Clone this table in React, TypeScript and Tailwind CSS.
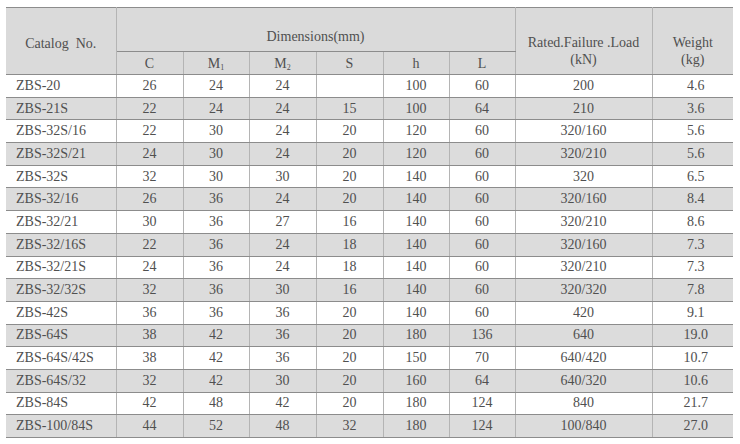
import React from 'react';

type Row = [string, string, string, string, string, string, string, string, string];

const ROWS: Row[] = [
  ['ZBS-20', '26', '24', '24', '', '100', '60', '200', '4.6'],
  ['ZBS-21S', '22', '24', '24', '15', '100', '64', '210', '3.6'],
  ['ZBS-32S/16', '22', '30', '24', '20', '120', '60', '320/160', '5.6'],
  ['ZBS-32S/21', '24', '30', '24', '20', '120', '60', '320/210', '5.6'],
  ['ZBS-32S', '32', '30', '30', '20', '140', '60', '320', '6.5'],
  ['ZBS-32/16', '26', '36', '24', '20', '140', '60', '320/160', '8.4'],
  ['ZBS-32/21', '30', '36', '27', '16', '140', '60', '320/210', '8.6'],
  ['ZBS-32/16S', '22', '36', '24', '18', '140', '60', '320/160', '7.3'],
  ['ZBS-32/21S', '24', '36', '24', '18', '140', '60', '320/210', '7.3'],
  ['ZBS-32/32S', '32', '36', '30', '16', '140', '60', '320/320', '7.8'],
  ['ZBS-42S', '36', '36', '36', '20', '140', '60', '420', '9.1'],
  ['ZBS-64S', '38', '42', '36', '20', '180', '136', '640', '19.0'],
  ['ZBS-64S/42S', '38', '42', '36', '20', '150', '70', '640/420', '10.7'],
  ['ZBS-64S/32', '32', '42', '30', '20', '160', '64', '640/320', '10.6'],
  ['ZBS-84S', '42', '48', '42', '20', '180', '124', '840', '21.7'],
  ['ZBS-100/84S', '44', '52', '48', '32', '180', '124', '100/840', '27.0'],
];

const WIDTHS = [110, 67, 66, 67, 67, 66, 66, 137, 81];

const font = "font-['Times_New_Roman','Liberation_Serif',serif] text-[14px] text-[#505050]";
// vertical rules are lighter than the horizontal ones
const cell = `${font} border-y border-y-[#8c8c8c] border-x border-x-[#b4b4b4] font-normal`;

const App: React.FC = () => {
  return (
    <div className={`w-[740px] h-[444px] bg-white pt-[7px] pl-[6px] ${font}`}>
      <table className={`border-collapse table-fixed w-[727px] ${font}`}>
        <colgroup>
          {WIDTHS.map((w, i) => (
            <col key={i} style={{ width: w }} />
          ))}
        </colgroup>
        <thead className="bg-[#dadada]">
          <tr className="h-[44px]">
            <th rowSpan={2} className={`${cell} border-l-0 text-center pt-[5px]`}>
              Catalog&nbsp; No.
            </th>
            <th colSpan={6} className={`${cell} text-center align-bottom pb-[4px]`}>
              Dimensions(mm)
            </th>
            <th rowSpan={2} className={`${cell} text-center leading-[17px] pt-[19px]`}>
              Rated.Failure .Load
              <br />
              (kN)
            </th>
            <th rowSpan={2} className={`${cell} border-r-0 text-center leading-[17px] pt-[19px]`}>
              Weight
              <br />
              (kg)
            </th>
          </tr>
          <tr className="h-[23px]">
            <th className={cell}>C</th>
            <th className={cell}>
              M<sub className="text-[8px]">1</sub>
            </th>
            <th className={cell}>
              M<sub className="text-[8px]">2</sub>
            </th>
            <th className={cell}>S</th>
            <th className={cell}>h</th>
            <th className={cell}>L</th>
          </tr>
        </thead>
        <tbody>
          {ROWS.map((row, r) => (
            <tr key={row[0]} className={`h-[22.7px] ${r % 2 === 1 ? 'bg-[#dcdcdc]' : 'bg-white'}`}>
              {row.map((v, c) => (
                <td
                  key={c}
                  className={`${cell} leading-[20px] p-0 ${
                    c === 0 ? 'border-l-0 text-left pl-[10px]' : c === 8 ? 'border-r-0 text-center pl-[6px]' : 'text-center'
                  }`}
                >
                  {v}
                </td>
              ))}
            </tr>
          ))}
        </tbody>
      </table>
    </div>
  );
};

export default App;
